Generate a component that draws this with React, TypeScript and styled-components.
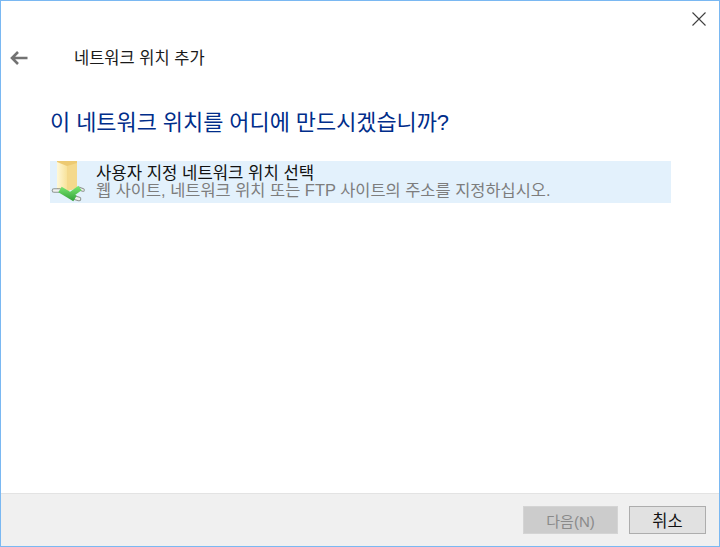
import styled, { createGlobalStyle } from "styled-components";

const GlobalStyle = createGlobalStyle`
  html, body {
    margin: 0;
    padding: 0;
    background: #ffffff;
  }
  body {
    font-family: "Liberation Sans", "Noto Sans CJK KR", sans-serif;
  }
`;

export default function App() {
  return (
    <>
      <GlobalStyle />
      <Window>
        <TitleBar>
          <CloseButton aria-label="닫기">
            <svg width="14" height="14" viewBox="0 0 14 14">
              <path d="M0.5 0.5L13.5 13.5M13.5 0.5L0.5 13.5" stroke="#404040" strokeWidth="1.1" fill="none" />
            </svg>
          </CloseButton>
        </TitleBar>
        <NavRow>
          <BackButton aria-label="뒤로">
            <svg width="18" height="14" viewBox="0 0 18 14">
              <path d="M8 1L2 7L8 13M2.5 7H17.5" stroke="#727272" strokeWidth="2.6" fill="none" />
            </svg>
          </BackButton>
          <WindowTitle>네트워크 위치 추가</WindowTitle>
        </NavRow>
        <Content>
          <Heading>이 네트워크 위치를 어디에 만드시겠습니까?</Heading>
          <Option>
            <FolderIcon />
            <OptionText>
              <OptionTitle>사용자 지정 네트워크 위치 선택</OptionTitle>
              <OptionDesc>웹 사이트, 네트워크 위치 또는 FTP 사이트의 주소를 지정하십시오.</OptionDesc>
            </OptionText>
          </Option>
        </Content>
        <Footer>
          <NextButton disabled>다음(N)</NextButton>
          <CancelButton>취소</CancelButton>
        </Footer>
      </Window>
    </>
  );
}

function FolderIcon() {
  return (
    <IconBox>
      <svg width="40" height="42" viewBox="0 0 40 42">
        <defs>
          <linearGradient id="folderFace" x1="0" y1="0" x2="1" y2="0">
            <stop offset="0" stopColor="#fff8d8" />
            <stop offset="1" stopColor="#f8e29a" />
          </linearGradient>
          <linearGradient id="pipe" gradientUnits="userSpaceOnUse" x1="0" y1="25" x2="0" y2="41">
            <stop offset="0" stopColor="#7ce873" />
            <stop offset="1" stopColor="#2c9c35" />
          </linearGradient>
        </defs>
        <path d="M7 0H27V27L17 30H7Z" fill="#edca72" />
        <path d="M7 1L17 5V30L7 27Z" fill="url(#folderFace)" />
        <path d="M17 5L27 2V27L17 30Z" fill="#f4d98c" />
        <path d="M4 29.5H10" stroke="#8f9591" strokeWidth="4.6" strokeLinecap="round" />
        <path d="M4 29.5H10" stroke="#eef0ee" strokeWidth="2.6" strokeLinecap="round" />
        <path d="M29 27.5L33 29" stroke="#8f9591" strokeWidth="3.6" strokeLinecap="round" />
        <path d="M29 27.5L33 29" stroke="#eef0ee" strokeWidth="1.8" strokeLinecap="round" />
        <path d="M24 36.5L29 38" stroke="#8f9591" strokeWidth="4.6" strokeLinecap="round" />
        <path d="M24 36.5L29 38" stroke="#eef0ee" strokeWidth="2.6" strokeLinecap="round" />
        <path d="M19 35L30 27" stroke="url(#pipe)" strokeWidth="5.5" fill="none" />
        <path d="M10 28.5L25 37.5" stroke="url(#pipe)" strokeWidth="6.5" fill="none" />
      </svg>
    </IconBox>
  );
}

const Window = styled.div`
  box-sizing: border-box;
  width: 720px;
  height: 547px;
  display: flex;
  flex-direction: column;
  background: #ffffff;
  border: 1px solid #7ab8f2;
`;

const TitleBar = styled.div`
  display: flex;
  justify-content: flex-end;
  height: 37px;
  padding: 11px 13px 0 0;
  box-sizing: border-box;
`;

const CloseButton = styled.div`
  width: 14px;
  height: 14px;
  line-height: 0;
`;

const NavRow = styled.div`
  display: flex;
  align-items: center;
  height: 40px;
  padding-left: 9px;
`;

const BackButton = styled.div`
  width: 18px;
  height: 14px;
  line-height: 0;
  margin-right: 46px;
`;

const WindowTitle = styled.div`
  font-size: 16.5px;
  line-height: 40px;
  color: #1a1a1a;
`;

const Content = styled.div`
  flex: 1;
  padding: 28px 48px 0 49px;
`;

const Heading = styled.h1`
  margin: 0 0 21px;
  font-size: 21.9px;
  font-weight: 400;
  line-height: 34px;
  color: #002d8a;
`;

const Option = styled.div`
  display: flex;
  align-items: center;
  height: 42px;
  background: #e3f1fc;
`;

const IconBox = styled.div`
  width: 46px;
  height: 42px;
  line-height: 0;
`;

const OptionText = styled.div`
  display: flex;
  flex-direction: column;
`;

const OptionTitle = styled.div`
  font-size: 16.7px;
  line-height: 16px;
  color: #111111;
`;

const OptionDesc = styled.div`
  font-size: 16.45px;
  line-height: 16px;
  color: #7d7d7d;
`;

const Footer = styled.div`
  box-sizing: border-box;
  height: 53px;
  display: flex;
  justify-content: flex-end;
  align-items: flex-start;
  gap: 11px;
  padding: 12px 13px 0 0;
  background: #f0f0f0;
  border-top: 1px solid #e3e3e3;
`;

const NextButton = styled.button`
  width: 95px;
  height: 28px;
  padding: 0;
  font: 15px "Liberation Sans", "Noto Sans CJK KR", sans-serif;
  color: #8a8a8a;
  background: #cccccc;
  border: 1px solid #d4d4d4;
`;

const CancelButton = styled.button`
  width: 77px;
  height: 28px;
  padding: 0;
  font: 16.5px "Liberation Sans", "Noto Sans CJK KR", sans-serif;
  color: #111111;
  background: #e1e1e1;
  border: 1px solid #adadad;
`;
